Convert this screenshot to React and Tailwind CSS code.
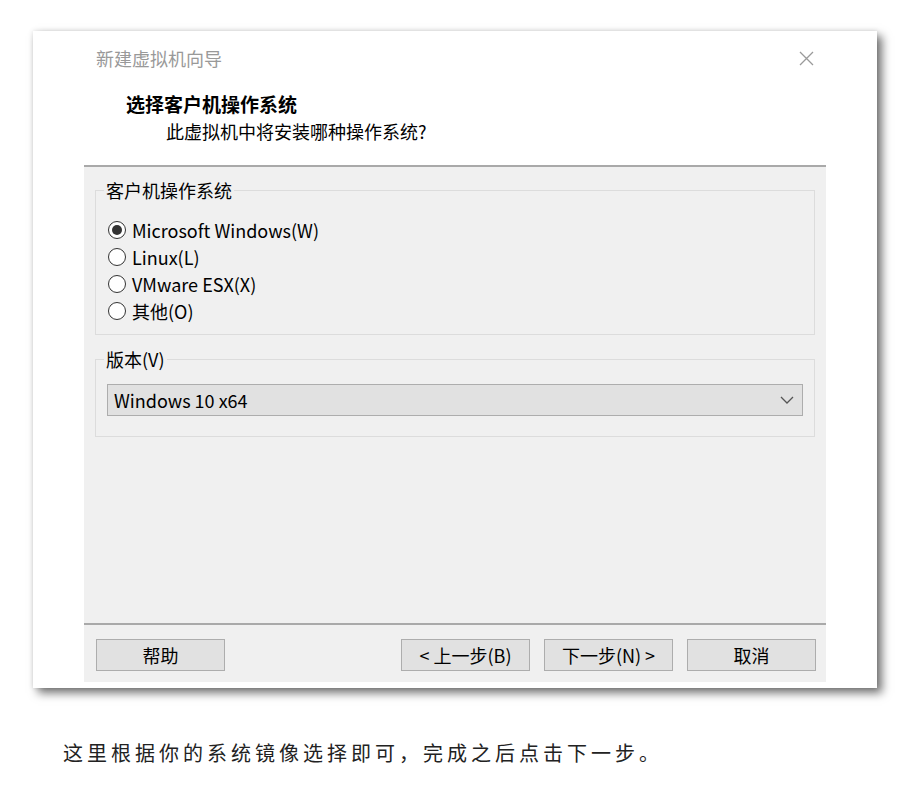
import React from "react";

const os = [
  { label: "Microsoft Windows(W)", checked: true },
  { label: "Linux(L)" },
  { label: "VMware ESX(X)" },
  { label: "其他(O)" },
];

function Radio({ checked }) {
  return (
    <span className="w-[18px] h-[18px] rounded-full border border-[#333] bg-white flex items-center justify-center shrink-0">
      {checked && <span className="w-[10px] h-[10px] rounded-full bg-[#333]" />}
    </span>
  );
}

function WinButton({ children }) {
  return (
    <button className="w-[129px] h-[32px] border border-[#adadad] bg-[#e1e1e1] text-[18px] leading-none text-black flex items-center justify-center">
      {children}
    </button>
  );
}

export default function App() {
  return (
    <div
      className="min-h-screen bg-white pt-[31px] pl-[33px]"
      style={{ fontFamily: '"Noto Sans CJK SC", "Noto Sans", sans-serif' }}
    >
      <div className="w-[844px] h-[657px] bg-white flex flex-col shadow-[5px_5px_9px_rgba(0,0,0,0.55),0_0_5px_rgba(0,0,0,0.12)]">
        <div className="h-[134px] flex flex-col">
          <div className="mt-[15px] h-[24px] flex items-center justify-between pl-[63px] pr-[63px]">
            <span className="text-[18px] leading-[24px] text-[#999]">新建虚拟机向导</span>
            <svg width="15" height="15" viewBox="0 0 15 15" className="text-[#9a9a9a]">
              <path d="M1 1L14 14M14 1L1 14" stroke="currentColor" strokeWidth="1.3" fill="none" />
            </svg>
          </div>
          <div className="mt-[21px] h-[26px] pl-[93px] text-[19px] leading-[26px] font-bold text-black">
            选择客户机操作系统
          </div>
          <div className="mt-[2px] h-[24px] pl-[133px] text-[18px] leading-[24px] text-black">
            此虚拟机中将安装哪种操作系统?
          </div>
        </div>

        <div className="ml-[51px] w-[742px] h-[517px] bg-[#f0f0f0] border-t-2 border-[#a9a9a9] flex flex-col">
          <fieldset className="mx-[11px] mt-[11px] border border-[#dcdcdc] pl-[12px] pt-[14px] pb-[10px]">
            <legend className="-ml-[4px] px-[2px] text-[18px] leading-[24px] text-black">客户机操作系统</legend>
            {os.map((o) => (
              <div key={o.label} className="h-[27px] flex items-center gap-[6px]">
                <Radio checked={o.checked} />
                <span className="text-[18px] leading-[24px] text-black">{o.label}</span>
              </div>
            ))}
          </fieldset>

          <fieldset className="mx-[11px] mt-[12px] border border-[#dcdcdc] px-[11px] pt-[13px] pb-[20px]">
            <legend className="-ml-[3px] px-[2px] text-[18px] leading-[24px] text-black">版本(V)</legend>
            <div className="h-[32px] border border-[#adadad] bg-[#e1e1e1] flex items-center justify-between pl-[6px] pr-[8px]">
              <span className="text-[18px] leading-[24px] text-black">Windows 10 x64</span>
              <svg width="14" height="8" viewBox="0 0 14 8" className="text-[#555]">
                <path d="M1 1L7 7L13 1" stroke="currentColor" strokeWidth="1.3" fill="none" />
              </svg>
            </div>
          </fieldset>

          <div className="flex-1" />

          <div className="h-[59px] border-t-2 border-[#a9a9a9] flex items-start pt-[14px] pl-[12px] pr-[10px]">
            <WinButton>帮助</WinButton>
            <div className="flex-1" />
            <div className="flex gap-[14px]">
              <WinButton>&lt; 上一步(B)</WinButton>
              <WinButton>下一步(N) &gt;</WinButton>
              <WinButton>取消</WinButton>
            </div>
          </div>
        </div>
      </div>

      <p className="mt-[50px] ml-[30px] text-[20px] leading-[30px] tracking-[4px] text-[#222]">
        这里根据你的系统镜像选择即可，完成之后点击下一步。
      </p>
    </div>
  );
}
